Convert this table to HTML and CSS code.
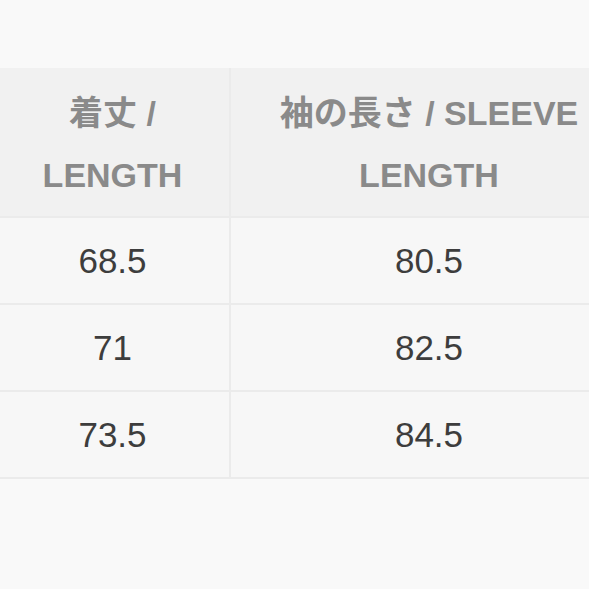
FILE: index.html
```html
<!DOCTYPE html>
<html>
<head>
<meta charset="utf-8">
<link rel="stylesheet" href="styles.css">
</head>
<body>
<div class="page">
<table class="size-table">
  <thead>
    <tr>
      <th class="col-a">着丈 / LENGTH</th>
      <th class="col-b">袖の長さ / SLEEVE LENGTH</th>
    </tr>
  </thead>
  <tbody>
    <tr><td>68.5</td><td>80.5</td></tr>
    <tr><td>71</td><td>82.5</td></tr>
    <tr><td>73.5</td><td>84.5</td></tr>
  </tbody>
</table>
</div>
</body>
</html>
```
FILE: styles.css
```css
html, body {
  margin: 0;
  padding: 0;
  background: #f9f9f9;
  overflow: hidden;
}
.page {
  width: 589px;
  height: 589px;
  padding-top: 68px;
  box-sizing: border-box;
  overflow: hidden;
}
.size-table {
  margin-left: -6px;
  border-collapse: collapse;
  table-layout: fixed;
  width: 633px;
  font-family: "Liberation Sans", "Noto Sans CJK JP", Arial, sans-serif;
}
.col-a { width: 235px; }
.col-b { width: 398px; }
.size-table th {
  background: #f1f1f1;
  color: #8a8a8a;
  font-weight: bold;
  font-size: 34px;
  line-height: 62px;
  height: 149px;
  padding: 3px 12px 0;
  box-sizing: border-box;
  text-align: center;
  vertical-align: middle;
  border: 2px solid #ebebeb;
  border-top: none;
}
.size-table td {
  background: #f7f7f7;
  color: #3d3d3d;
  font-size: 35px;
  height: 87px;
  padding: 0;
  box-sizing: border-box;
  text-align: center;
  vertical-align: middle;
  border: 2px solid #ebebeb;
}
```
